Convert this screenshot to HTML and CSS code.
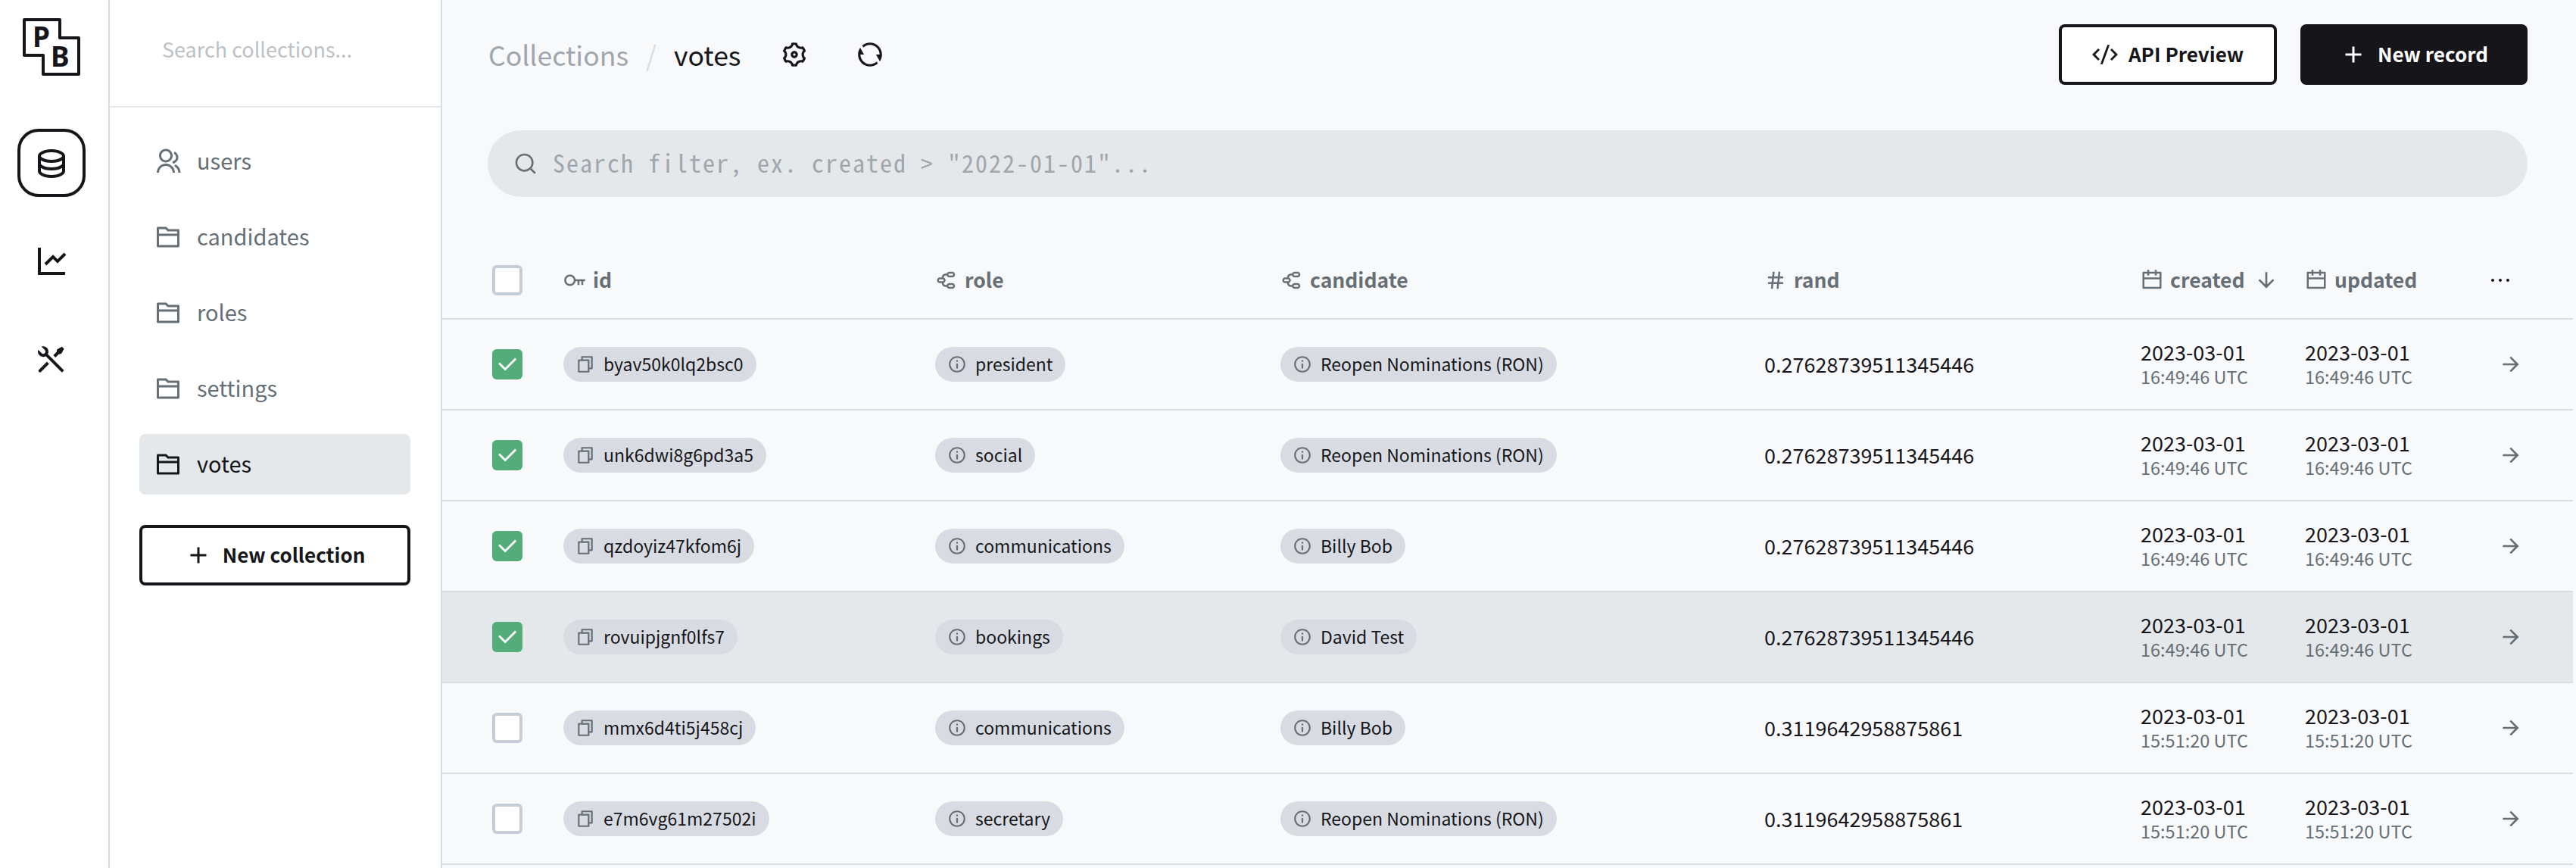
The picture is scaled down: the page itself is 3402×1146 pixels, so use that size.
FILE: index.html
```html
<!DOCTYPE html>
<html lang="en">
<head>
<meta charset="utf-8">
<title>PocketBase - votes</title>
<link rel="stylesheet" href="styles.css">
</head>
<body>
<svg class="defs" aria-hidden="true">
  <symbol id="i-db" viewBox="0 0 24 24"><path d="M5 12.5C5 12.8134 5.46101 13.3584 6.53047 13.8931C7.91405 14.5849 9.87677 15 12 15C14.1232 15 16.0859 14.5849 17.4695 13.8931C18.539 13.3584 19 12.8134 19 12.5V10.3287C17.35 11.3482 14.8273 12 12 12C9.17273 12 6.64996 11.3482 5 10.3287V12.5ZM19 15.3287C17.35 16.3482 14.8273 17 12 17C9.17273 17 6.64996 16.3482 5 15.3287V17.5C5 17.8134 5.46101 18.3584 6.53047 18.8931C7.91405 19.5849 9.87677 20 12 20C14.1232 20 16.0859 19.5849 17.4695 18.8931C18.539 18.3584 19 17.8134 19 17.5V15.3287ZM3 17.5V7.5C3 5.01472 7.02944 3 12 3C16.9706 3 21 5.01472 21 7.5V17.5C21 19.9853 16.9706 22 12 22C7.02944 22 3 19.9853 3 17.5ZM12 10C14.1232 10 16.0859 9.58492 17.4695 8.89313C18.539 8.3584 19 7.81342 19 7.5C19 7.18658 18.539 6.6416 17.4695 6.10687C16.0859 5.41508 14.1232 5 12 5C9.87677 5 7.91405 5.41508 6.53047 6.10687C5.46101 6.6416 5 7.18658 5 7.5C5 7.81342 5.46101 8.3584 6.53047 8.89313C7.91405 9.58492 9.87677 10 12 10Z"/></symbol>
  <symbol id="i-chart" viewBox="0 0 24 24"><path d="M5 3V19H21V21H3V3H5ZM20.2929 6.29289L21.7071 7.70711L16 13.4142L13 10.415L8.70711 14.7071L7.29289 13.2929L13 7.58579L16 10.585L20.2929 6.29289Z"/></symbol>
  <symbol id="i-tools" viewBox="0 0 24 24"><path d="M5.32943 3.27158C6.56252 2.8332 7.9923 3.10749 8.97927 4.09446C10.1002 5.21537 10.3019 6.90741 9.5843 8.23385L20.293 18.9437L18.8788 20.3579L8.16982 9.64875C6.84325 10.3669 5.15069 10.1654 4.02952 9.04421C3.04227 8.05696 2.7681 6.62665 3.20701 5.39332L5.44373 7.63C6.02952 8.21578 6.97927 8.21578 7.56505 7.63C8.15084 7.04421 8.15084 6.09446 7.56505 5.50868L5.32943 3.27158ZM15.6968 5.15512L18.8788 3.38736L20.293 4.80157L18.5252 7.98355L16.7574 8.3371L14.6361 10.4584L13.2219 9.04421L15.3432 6.92289L15.6968 5.15512ZM8.97927 13.2868L10.3935 14.7011L5.09018 20.0044C4.69966 20.3949 4.06649 20.3949 3.67597 20.0044C3.31334 19.6417 3.28744 19.0699 3.59826 18.6774L3.67597 18.5902L8.97927 13.2868Z"/></symbol>
  <symbol id="i-group" viewBox="0 0 24 24"><path d="M2 22C2 17.5817 5.58172 14 10 14C14.4183 14 18 17.5817 18 22H16C16 18.6863 13.3137 16 10 16C6.68629 16 4 18.6863 4 22H2ZM10 13C6.685 13 4 10.315 4 7C4 3.685 6.685 1 10 1C13.315 1 16 3.685 16 7C16 10.315 13.315 13 10 13ZM10 11C12.21 11 14 9.21 14 7C14 4.79 12.21 3 10 3C7.79 3 6 4.79 6 7C6 9.21 7.79 11 10 11ZM18.2837 14.7028C21.0644 15.9561 23 18.752 23 22H21C21 19.564 19.5483 17.4671 17.4628 16.5271L18.2837 14.7028ZM17.5962 3.41321C19.5944 4.23703 21 6.20361 21 8.5C21 11.3702 18.8042 13.7252 16 13.9776V11.9646C17.6967 11.7222 19 10.264 19 8.5C19 7.11935 18.2016 5.92603 17.041 5.35635L17.5962 3.41321Z"/></symbol>
  <symbol id="i-folder" viewBox="0 0 24 24"><path d="M12.4142 5H21C21.5523 5 22 5.44772 22 6V20C22 20.5523 21.5523 21 21 21H3C2.44772 21 2 20.5523 2 20V4C2 3.44772 2.44772 3 3 3H10.4142L12.4142 5ZM20 11H4V19H20V11ZM20 9V7H11.5858L9.58579 5H4V9H20Z"/></symbol>
  <symbol id="i-gear" viewBox="0 0 24 24"><path d="M3.33946 17.0002C2.90721 16.2515 2.58277 15.4702 2.36133 14.6741C3.3338 14.1779 3.99972 13.1668 3.99972 12.0002C3.99972 10.8345 3.3348 9.824 2.36353 9.32741C2.81025 7.71651 3.65857 6.21627 4.86474 4.99001C5.7807 5.58416 6.98935 5.65534 7.99972 5.072C9.01009 4.48866 9.55277 3.40635 9.4962 2.31604C11.1613 1.8846 12.8847 1.90004 14.5031 2.31862C14.4475 3.40806 14.9901 4.48912 15.9997 5.072C17.0101 5.65532 18.2187 5.58416 19.1346 4.99007C19.7133 5.57986 20.2277 6.25151 20.66 7.00021C21.0922 7.7489 21.4167 8.53025 21.6381 9.32628C20.6656 9.82247 19.9997 10.8336 19.9997 12.0002C19.9997 13.166 20.6646 14.1764 21.6359 14.673C21.1892 16.2839 20.3409 17.7841 19.1347 19.0104C18.2187 18.4163 17.0101 18.3451 15.9997 18.9284C14.9893 19.5117 14.4467 20.5941 14.5032 21.6844C12.8382 22.1158 11.1148 22.1004 9.49633 21.6818C9.55191 20.5923 9.00929 19.5113 7.99972 18.9284C6.98938 18.3451 5.78079 18.4162 4.86484 19.0103C4.28617 18.4205 3.77172 17.7489 3.33946 17.0002ZM8.99972 17.1964C10.0911 17.8265 10.8749 18.8227 11.2503 19.9659C11.7486 20.0133 12.2502 20.014 12.7486 19.9675C13.1238 18.8237 13.9078 17.8268 14.9997 17.1964C16.0916 16.5659 17.347 16.3855 18.5252 16.6324C18.8146 16.224 19.0648 15.7892 19.2729 15.334C18.4706 14.4373 17.9997 13.2604 17.9997 12.0002C17.9997 10.74 18.4706 9.5632 19.2729 8.6665C19.1688 8.4405 19.0538 8.21822 18.9279 8.00021C18.802 7.78219 18.667 7.57148 18.5233 7.36842C17.3457 7.61476 16.0911 7.43414 14.9997 6.80405C13.9083 6.17395 13.1246 5.17768 12.7491 4.03455C12.2509 3.98714 11.7492 3.98646 11.2509 4.03292C10.8756 5.17671 10.0916 6.17364 8.99972 6.80405C7.9078 7.43447 6.65245 7.61494 5.47428 7.36803C5.18485 7.77641 4.93463 8.21117 4.72656 8.66637C5.52881 9.56311 5.99972 10.74 5.99972 12.0002C5.99972 13.2604 5.52883 14.4372 4.72656 15.3339C4.83067 15.5599 4.94564 15.7822 5.07152 16.0002C5.19739 16.2182 5.3324 16.4289 5.47612 16.632C6.65377 16.3857 7.90838 16.5663 8.99972 17.1964ZM11.9997 15.0002C10.3429 15.0002 8.99972 13.6571 8.99972 12.0002C8.99972 10.3434 10.3429 9.00021 11.9997 9.00021C13.6566 9.00021 14.9997 10.3434 14.9997 12.0002C14.9997 13.6571 13.6566 15.0002 11.9997 15.0002ZM11.9997 13.0002C12.552 13.0002 12.9997 12.5479 12.9997 12.0002C12.9997 11.4479 12.552 11.0002 11.9997 11.0002C11.4474 11.0002 10.9997 11.4479 10.9997 12.0002C10.9997 12.5525 11.4474 13.0002 11.9997 13.0002Z"/></symbol>
  <symbol id="i-refresh" viewBox="0 0 24 24"><path d="M5.46257 4.43262C7.21556 2.91688 9.5007 2 12 2C17.5228 2 22 6.47715 22 12C22 14.1361 21.3302 16.1158 20.1892 17.7406L17 12H20C20 7.58172 16.4183 4 12 4C9.84982 4 7.89777 4.84827 6.46023 6.22842L5.46257 4.43262ZM18.5374 19.5674C16.7844 21.0831 14.4993 22 12 22C6.47715 22 2 17.5228 2 12C2 9.86386 2.66979 7.88416 3.8108 6.25944L7 12H4C4 16.4183 7.58172 20 12 20C14.1502 20 16.1022 19.1517 17.5398 17.7716L18.5374 19.5674Z"/></symbol>
  <symbol id="i-search" viewBox="0 0 24 24"><path d="M18.031 16.6168L22.3137 20.8995L20.8995 22.3137L16.6168 18.031C15.0769 19.263 13.124 20 11 20C6.032 20 2 15.968 2 11C2 6.032 6.032 2 11 2C15.968 2 20 6.032 20 11C20 13.124 19.263 15.0769 18.031 16.6168ZM16.0247 15.8748C17.2475 14.6146 18 12.8956 18 11C18 7.1325 14.8675 4 11 4C7.1325 4 4 7.1325 4 11C4 14.8675 7.1325 18 11 18C12.8956 18 14.6146 17.2475 15.8748 16.0247L16.0247 15.8748Z"/></symbol>
  <symbol id="i-code" viewBox="0 0 24 24"><path d="M24 12L18.3431 17.6569L16.9289 16.2426L21.1716 12L16.9289 7.75736L18.3431 6.34315L24 12ZM2.82843 12L7.07107 16.2426L5.65685 17.6569L0 12L5.65685 6.34315L7.07107 7.75736L2.82843 12ZM9.78845 21H7.66009L14.2116 3H16.3399L9.78845 21Z"/></symbol>
  <symbol id="i-add" viewBox="0 0 24 24"><path d="M11 11V5H13V11H19V13H13V19H11V13H5V11H11Z"/></symbol>
  <symbol id="i-key" viewBox="0 0 24 24"><path d="M12.917 13C12.441 15.837 9.973 18 7 18C3.686 18 1 15.314 1 12C1 8.686 3.686 6 7 6C9.973 6 12.441 8.163 12.917 11H23V13H21V17H19V13H17V17H15V13H12.917ZM7 16C9.209 16 11 14.209 11 12C11 9.791 9.209 8 7 8C4.791 8 3 9.791 3 12C3 14.209 4.791 16 7 16Z"/></symbol>
  <symbol id="i-map" viewBox="0 0 24 24"><path d="M18 3C19.6569 3 21 4.34315 21 6C21 7.65685 19.6569 9 18 9H15C13.6941 9 12.5831 8.16562 12.171 7.0009L11 7C9.9 7 9 7.9 9 9L9.0009 9.17102C10.1656 9.58312 11 10.6941 11 12C11 13.3059 10.1656 14.4169 9.0009 14.829L9 15C9 16.1 9.9 17 11 17L12.1707 17.0001C12.5825 15.8349 13.6937 15 15 15H18C19.6569 15 21 16.3431 21 18C21 19.6569 19.6569 21 18 21H15C13.6941 21 12.5831 20.1656 12.171 19.0009L11 19C8.79 19 7 17.21 7 15H5C3.34315 15 2 13.6569 2 12C2 10.3431 3.34315 9 5 9H7C7 6.79086 8.79086 5 11 5L12.1707 5.00009C12.5825 3.83485 13.6937 3 15 3H18ZM18 17H15C14.4477 17 14 17.4477 14 18C14 18.5523 14.4477 19 15 19H18C18.5523 19 19 18.5523 19 18C19 17.4477 18.5523 17 18 17ZM8 11H5C4.44772 11 4 11.4477 4 12C4 12.5523 4.44772 13 5 13H8C8.55228 13 9 12.5523 9 12C9 11.4477 8.55228 11 8 11ZM18 5H15C14.4477 5 14 5.44772 14 6C14 6.55228 14.4477 7 15 7H18C18.5523 7 19 6.55228 19 6C19 5.44772 18.5523 5 18 5Z"/></symbol>
  <symbol id="i-hash" viewBox="0 0 24 24"><path d="M7.78428 14L8.2047 10H4V8H8.41491L8.94043 3H10.9514L10.4259 8H14.4149L14.9404 3H16.9514L16.4259 8H20V10H16.2157L15.7953 14H20V16H15.5851L15.0596 21H13.0486L13.5741 16H9.58509L9.05957 21H7.04855L7.57407 16H4V14H7.78428ZM9.7953 14H13.7843L14.2047 10H10.2157L9.7953 14Z"/></symbol>
  <symbol id="i-cal" viewBox="0 0 24 24"><path d="M9 1V3H15V1H17V3H21C21.5523 3 22 3.44772 22 4V20C22 20.5523 21.5523 21 21 21H3C2.44772 21 2 20.5523 2 20V4C2 3.44772 2.44772 3 3 3H7V1H9ZM20 11H4V19H20V11ZM7 5H4V9H20V5H17V7H15V5H9V7H7V5Z"/></symbol>
  <symbol id="i-down" viewBox="0 0 24 24"><path d="M13 16.1716L18.3638 10.8076L19.7781 12.2218L12 20L4.22183 12.2218L5.63604 10.8076L11 16.1716V4H13V16.1716Z"/></symbol>
  <symbol id="i-right" viewBox="0 0 24 24"><path d="M16.1716 10.9999L10.8076 5.63589L12.2218 4.22168L20 11.9999L12.2218 19.778L10.8076 18.3638L16.1716 12.9999H4V10.9999H16.1716Z"/></symbol>
  <symbol id="i-more" viewBox="0 0 24 24"><path d="M4.5 10.5C3.675 10.5 3 11.175 3 12C3 12.825 3.675 13.5 4.5 13.5C5.325 13.5 6 12.825 6 12C6 11.175 5.325 10.5 4.5 10.5ZM19.5 10.5C18.675 10.5 18 11.175 18 12C18 12.825 18.675 13.5 19.5 13.5C20.325 13.5 21 12.825 21 12C21 11.175 20.325 10.5 19.5 10.5ZM12 10.5C11.175 10.5 10.5 11.175 10.5 12C10.5 12.825 11.175 13.5 12 13.5C12.825 13.5 13.5 12.825 13.5 12C13.5 11.175 12.825 10.5 12 10.5Z"/></symbol>
  <symbol id="i-info" viewBox="0 0 24 24"><path d="M12 22C6.47715 22 2 17.5228 2 12C2 6.47715 6.47715 2 12 2C17.5228 2 22 6.47715 22 12C22 17.5228 17.5228 22 12 22ZM12 20C16.4183 20 20 16.4183 20 12C20 7.58172 16.4183 4 12 4C7.58172 4 4 7.58172 4 12C4 16.4183 7.58172 20 12 20ZM11 7H13V9H11V7ZM11 11H13V17H11V11Z"/></symbol>
  <symbol id="i-copy" viewBox="0 0 24 24"><path d="M6.9998 6V3C6.9998 2.44772 7.44752 2 7.9998 2H19.9998C20.5521 2 20.9998 2.44772 20.9998 3V17C20.9998 17.5523 20.5521 18 19.9998 18H16.9998V20.9991C16.9998 21.5519 16.5499 22 15.993 22H4.00666C3.45059 22 3 21.5554 3 20.9991L3.0026 7.00087C3.0027 6.44811 3.45264 6 4.00942 6H6.9998ZM5.00242 8L5.00019 20H14.9998V8H5.00242ZM8.9998 6H16.9998V16H18.9998V4H8.9998V6Z"/></symbol>
  <symbol id="i-check" viewBox="0 0 24 24"><path d="M10 15.172L19.192 5.979L20.607 7.393L10 18L3.636 11.636L5.05 10.222L10 15.172Z"/></symbol>
</svg>

<div class="app">
  <nav class="rail">
    <svg class="logo" viewBox="0 0 76 76">
      <path class="logo-line" d="M2 2H49V26H74V74H27V49H2Z"/>
      <text class="logo-txt" x="13" y="38">P</text>
      <text class="logo-txt" x="37" y="64">B</text>
    </svg>
    <a class="rail-btn active"><svg class="ic ic-48"><use href="#i-db"/></svg></a>
    <a class="rail-btn"><svg class="ic ic-48"><use href="#i-chart"/></svg></a>
    <a class="rail-btn"><svg class="ic ic-48"><use href="#i-tools"/></svg></a>
  </nav>

  <aside class="side">
    <div class="side-search">Search collections...</div>
    <div class="side-list">
      <a class="side-item"><svg class="ic ic-36"><use href="#i-group"/></svg><span>users</span></a>
      <a class="side-item"><svg class="ic ic-36"><use href="#i-folder"/></svg><span>candidates</span></a>
      <a class="side-item"><svg class="ic ic-36"><use href="#i-folder"/></svg><span>roles</span></a>
      <a class="side-item"><svg class="ic ic-36"><use href="#i-folder"/></svg><span>settings</span></a>
      <a class="side-item active"><svg class="ic ic-36"><use href="#i-folder"/></svg><span>votes</span></a>
      <button class="btn btn-outline btn-full"><svg class="ic ic-36"><use href="#i-add"/></svg><span>New collection</span></button>
    </div>
  </aside>

  <main class="main">
    <header class="topbar">
      <div class="crumbs">
        <span class="crumb-muted">Collections</span>
        <span class="crumb-sep">/</span>
        <span class="crumb-cur">votes</span>
      </div>
      <svg class="ic ic-38 top-gear"><use href="#i-gear"/></svg>
      <svg class="ic ic-38 top-refresh"><use href="#i-refresh"/></svg>
      <div class="top-actions">
        <button class="btn btn-outline btn-api"><svg class="ic ic-34"><use href="#i-code"/></svg><span>API Preview</span></button>
        <button class="btn btn-dark"><svg class="ic ic-36"><use href="#i-add"/></svg><span>New record</span></button>
      </div>
    </header>

    <div class="filter">
      <svg class="ic ic-32 hint"><use href="#i-search"/></svg>
      <span class="filter-txt">Search filter, ex. created &gt; "2022-01-01"...</span>
    </div>

    <section class="table">
      <div class="row row-head">
        <div class="cell"><span class="cb"></span></div>
        <div class="cell th"><svg class="ic ic-30"><use href="#i-key"/></svg><span>id</span></div>
        <div class="cell th"><svg class="ic ic-30"><use href="#i-map"/></svg><span>role</span></div>
        <div class="cell th"><svg class="ic ic-30"><use href="#i-map"/></svg><span>candidate</span></div>
        <div class="cell th"><svg class="ic ic-30"><use href="#i-hash"/></svg><span>rand</span></div>
        <div class="cell th"><svg class="ic ic-30"><use href="#i-cal"/></svg><span>created</span><svg class="ic ic-32 sort"><use href="#i-down"/></svg></div>
        <div class="cell th"><svg class="ic ic-30"><use href="#i-cal"/></svg><span>updated</span></div>
        <div class="cell"><svg class="ic ic-32 more"><use href="#i-more"/></svg></div>
      </div>

      <div class="row">
        <div class="cell"><span class="cb on"><svg class="ic ic-34"><use href="#i-check"/></svg></span></div>
        <div class="cell"><span class="pill"><svg class="ic ic-26"><use href="#i-copy"/></svg>byav50k0lq2bsc0</span></div>
        <div class="cell"><span class="pill"><svg class="ic ic-26"><use href="#i-info"/></svg>president</span></div>
        <div class="cell"><span class="pill"><svg class="ic ic-26"><use href="#i-info"/></svg>Reopen Nominations (RON)</span></div>
        <div class="cell num">0.27628739511345446</div>
        <div class="cell date"><span>2023-03-01</span><small>16:49:46 UTC</small></div>
        <div class="cell date"><span>2023-03-01</span><small>16:49:46 UTC</small></div>
        <div class="cell"><svg class="ic ic-32 go"><use href="#i-right"/></svg></div>
      </div>

      <div class="row">
        <div class="cell"><span class="cb on"><svg class="ic ic-34"><use href="#i-check"/></svg></span></div>
        <div class="cell"><span class="pill"><svg class="ic ic-26"><use href="#i-copy"/></svg>unk6dwi8g6pd3a5</span></div>
        <div class="cell"><span class="pill"><svg class="ic ic-26"><use href="#i-info"/></svg>social</span></div>
        <div class="cell"><span class="pill"><svg class="ic ic-26"><use href="#i-info"/></svg>Reopen Nominations (RON)</span></div>
        <div class="cell num">0.27628739511345446</div>
        <div class="cell date"><span>2023-03-01</span><small>16:49:46 UTC</small></div>
        <div class="cell date"><span>2023-03-01</span><small>16:49:46 UTC</small></div>
        <div class="cell"><svg class="ic ic-32 go"><use href="#i-right"/></svg></div>
      </div>

      <div class="row">
        <div class="cell"><span class="cb on"><svg class="ic ic-34"><use href="#i-check"/></svg></span></div>
        <div class="cell"><span class="pill"><svg class="ic ic-26"><use href="#i-copy"/></svg>qzdoyiz47kfom6j</span></div>
        <div class="cell"><span class="pill"><svg class="ic ic-26"><use href="#i-info"/></svg>communications</span></div>
        <div class="cell"><span class="pill"><svg class="ic ic-26"><use href="#i-info"/></svg>Billy Bob</span></div>
        <div class="cell num">0.27628739511345446</div>
        <div class="cell date"><span>2023-03-01</span><small>16:49:46 UTC</small></div>
        <div class="cell date"><span>2023-03-01</span><small>16:49:46 UTC</small></div>
        <div class="cell"><svg class="ic ic-32 go"><use href="#i-right"/></svg></div>
      </div>

      <div class="row row-hover">
        <div class="cell"><span class="cb on"><svg class="ic ic-34"><use href="#i-check"/></svg></span></div>
        <div class="cell"><span class="pill"><svg class="ic ic-26"><use href="#i-copy"/></svg>rovuipjgnf0lfs7</span></div>
        <div class="cell"><span class="pill"><svg class="ic ic-26"><use href="#i-info"/></svg>bookings</span></div>
        <div class="cell"><span class="pill"><svg class="ic ic-26"><use href="#i-info"/></svg>David Test</span></div>
        <div class="cell num">0.27628739511345446</div>
        <div class="cell date"><span>2023-03-01</span><small>16:49:46 UTC</small></div>
        <div class="cell date"><span>2023-03-01</span><small>16:49:46 UTC</small></div>
        <div class="cell"><svg class="ic ic-32 go"><use href="#i-right"/></svg></div>
      </div>

      <div class="row">
        <div class="cell"><span class="cb"></span></div>
        <div class="cell"><span class="pill"><svg class="ic ic-26"><use href="#i-copy"/></svg>mmx6d4ti5j458cj</span></div>
        <div class="cell"><span class="pill"><svg class="ic ic-26"><use href="#i-info"/></svg>communications</span></div>
        <div class="cell"><span class="pill"><svg class="ic ic-26"><use href="#i-info"/></svg>Billy Bob</span></div>
        <div class="cell num">0.3119642958875861</div>
        <div class="cell date"><span>2023-03-01</span><small>15:51:20 UTC</small></div>
        <div class="cell date"><span>2023-03-01</span><small>15:51:20 UTC</small></div>
        <div class="cell"><svg class="ic ic-32 go"><use href="#i-right"/></svg></div>
      </div>

      <div class="row">
        <div class="cell"><span class="cb"></span></div>
        <div class="cell"><span class="pill"><svg class="ic ic-26"><use href="#i-copy"/></svg>e7m6vg61m27502i</span></div>
        <div class="cell"><span class="pill"><svg class="ic ic-26"><use href="#i-info"/></svg>secretary</span></div>
        <div class="cell"><span class="pill"><svg class="ic ic-26"><use href="#i-info"/></svg>Reopen Nominations (RON)</span></div>
        <div class="cell num">0.3119642958875861</div>
        <div class="cell date"><span>2023-03-01</span><small>15:51:20 UTC</small></div>
        <div class="cell date"><span>2023-03-01</span><small>15:51:20 UTC</small></div>
        <div class="cell"><svg class="ic ic-32 go"><use href="#i-right"/></svg></div>
      </div>
    </section>
  </main>
</div>
</body>
</html>
```

FILE: styles.css
```css
* { box-sizing: border-box; }
html, body { margin: 0; height: 100%; }
body {
  font-family: "Noto Sans CJK SC", "Noto Sans", sans-serif;
  font-size: 29px;
  line-height: 1.2;
  color: #16161a;
  background: #f8f9fa;
  overflow: hidden;
}
.defs { display: none; }
.ic { fill: currentColor; flex: none; display: block; }
.ic-48 { width: 48px; height: 48px; }
.ic-38 { width: 38px; height: 38px; }
.ic-36 { width: 36px; height: 36px; }
.ic-34 { width: 34px; height: 34px; }
.ic-32 { width: 32px; height: 32px; }
.ic-30 { width: 30px; height: 30px; }
.ic-26 { width: 26px; height: 26px; }
.hint { color: #666f75; }

.app { display: flex; height: 1146px; }

/* icon rail */
.rail {
  width: 145px;
  flex: none;
  background: #fff;
  border-right: 2px solid #d7dde4;
  display: flex;
  flex-direction: column;
  align-items: center;
  padding-top: 24px;
  padding-right: 7px;
}
.logo { width: 76px; height: 76px; margin-bottom: 70px; overflow: visible; }
.logo-line { fill: #fff; stroke: #16161a; stroke-width: 4; stroke-linejoin: round; }
.logo-txt { font-family: "Noto Sans", sans-serif; font-weight: 700; font-size: 37px; fill: #16161a; }
.rail-btn {
  width: 90px;
  height: 90px;
  margin-bottom: 40px;
  border-radius: 28px;
  display: flex;
  align-items: center;
  justify-content: center;
  border: 4px solid transparent;
}
.rail-btn.active { border-color: #16161a; }

/* collections sidebar */
.side {
  width: 439px;
  flex: none;
  background: #fff;
  border-right: 2px solid #d7dde4;
}
.side-search {
  height: 142px;
  border-bottom: 2px solid #e4e8eb;
  padding: 49px 0 0 69px;
  font-size: 27px;
  color: #bcc1c6;
}
.side-list { padding: 31px 40px 0 39px; }
.side-item {
  display: flex;
  align-items: center;
  gap: 20px;
  height: 80px;
  margin-bottom: 20px;
  padding-left: 20px;
  border-radius: 8px;
  color: #666f75;
}
.side-item span { margin-top: -3px; }
.side-item.active { background: #e4e8eb; color: #16161a; }

/* buttons */
.btn {
  display: flex;
  align-items: center;
  justify-content: center;
  gap: 14px;
  height: 80px;
  border-radius: 8px;
  font: inherit;
  font-size: 26px;
  font-weight: 600;
  padding: 0;
}
.btn span { margin-top: -2px; }
.btn-outline { background: #fff; border: 4px solid #16161a; color: #16161a; }
.btn-dark { background: #16161a; border: 0; color: #fff; width: 300px; }
.btn-full { width: 358px; margin-top: 40px; }
.btn-api { width: 288px; }

/* main column */
.main { flex: 1; min-width: 0; display: flex; flex-direction: column; }
.topbar {
  display: flex;
  align-items: center;
  height: 80px;
  margin: 32px 64px 0 61px;
}
.crumbs { display: flex; align-items: center; font-size: 35.6px; width: 385px; }
.crumb-muted { color: #a0a6ac; }
.crumb-sep { color: #d7dde4; margin: 0 23px; }
.crumb-cur { color: #16161a; }
.top-gear { margin-right: 62px; }
.top-actions { margin-left: auto; display: flex; gap: 31px; }

.filter {
  display: flex;
  align-items: center;
  gap: 20px;
  height: 88px;
  margin: 60px 64px 0 60px;
  padding-left: 34px;
  border-radius: 44px;
  background: #e4e8eb;
}
.filter-txt {
  font-family: "Noto Sans Mono CJK SC", "Liberation Mono", monospace;
  font-size: 32px;
  letter-spacing: 2px;
  margin-top: -3px;
  color: #a0a6ac;
}

/* records table */
.table { margin: 60px 4px 0 0; }
.row {
  display: grid;
  grid-template-columns: 160px 491px 456px 639px 497px 217px 242px 112px;
  height: 120px;
  border-bottom: 2px solid #d7dde4;
  font-size: 27px;
}
.row-head { height: 102px; }
.row-hover { background: #e4e8eb; }
.cell { display: flex; align-items: center; min-width: 0; white-space: nowrap; }
.cell:first-child { padding-left: 66px; }
.th { gap: 9px; font-size: 26.5px; font-weight: 600; color: #666f75; }
.th span { margin-top: -2px; }
.sort { margin-left: 3px; }
.more { color: #16161a; }
.go { color: #666f75; margin-left: 14px; }

.cb {
  width: 40px;
  height: 40px;
  border-radius: 6px;
  background: #fff;
  border: 4px solid #c6cdd7;
  display: flex;
  align-items: center;
  justify-content: center;
}
.cb.on { background: #54ac7b; border: 0; color: #fff; }

.pill {
  display: inline-flex;
  align-items: center;
  gap: 11px;
  height: 46px;
  padding: 0 17px 0 16px;
  border-radius: 23px;
  background: #d8dce2;
  font-size: 23px;
}
.pill .ic { color: #666f75; }

.date { flex-direction: column; align-items: flex-start; justify-content: center; line-height: 32px; }
.date small { font-size: 23.5px; color: #666f75; }
```
